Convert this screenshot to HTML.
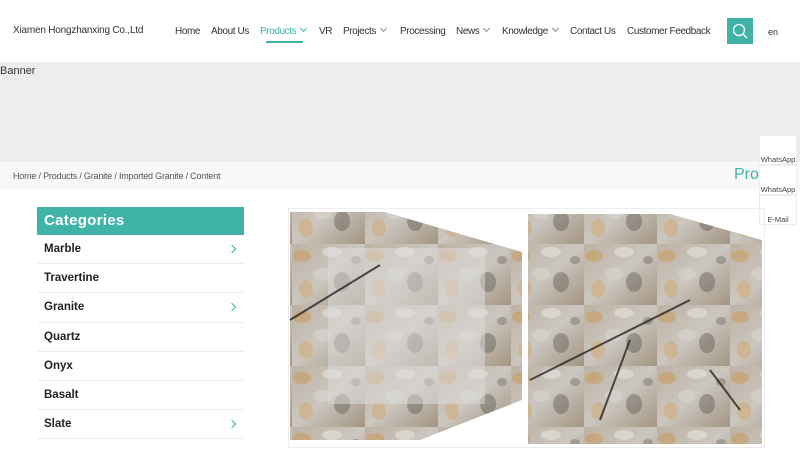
<!DOCTYPE html>
<html><head><meta charset="utf-8"><style>
*{margin:0;padding:0;box-sizing:border-box}
body{width:800px;height:450px;overflow:hidden;background:#fff;font-family:"Liberation Sans",sans-serif;position:relative;color:#333}
.logo{position:absolute;left:13px;top:25px;font-size:10px;letter-spacing:-0.2px;color:#333}
.nav{position:absolute;top:26px;font-size:10px;letter-spacing:-0.4px;color:#333;white-space:nowrap}
.nav span{position:absolute}
.chev{display:inline-block;width:5px;height:5px;border-right:1px solid #888;border-bottom:1px solid #888;transform:rotate(45deg);margin-left:5px;vertical-align:3px}
.search{position:absolute;left:727px;top:18px;width:26px;height:26px;background:#3fb3a8}
.banner{position:absolute;left:0;top:62px;width:800px;height:100px;background:#ededed;font-size:11px;padding-top:3px}
.crumb{position:absolute;left:0;top:163px;width:800px;height:26px;background:#f8f8f8;font-size:9px;letter-spacing:-0.2px;color:#555;padding:8px 13px}
.prod{position:absolute;left:734px;top:166px;font-size:16px;color:#3fb3a8}
.side{position:absolute;left:759px;width:38px;height:30px;background:#fff;border:1px solid #eee;font-size:7.5px;color:#444;text-align:center;padding-top:19px}
.cat{position:absolute;left:37px;top:207px;width:207px}
.cat h3{background:#3fb3a8;color:#fff;font-size:15px;font-weight:bold;height:28px;line-height:28px;padding-left:7px;letter-spacing:.3px}
.cat div{height:29.2px;border-bottom:1px solid #eee;font-size:11.5px;font-weight:bold;color:#222;padding:8px 0 0 7px;position:relative}
.cat i{position:absolute;right:9px;top:11px;width:6px;height:6px;border-right:1.3px solid #3fb3a8;border-top:1.3px solid #3fb3a8;transform:rotate(45deg)}
</style></head><body>
<div class="logo">Xiamen Hongzhanxing Co.,Ltd</div>
<div class="nav" style="left:0;width:720px">
<span style="left:175px">Home</span><span style="left:211px">About Us</span>
<span style="left:260px;color:#3fb3a8">Products<i class="chev" style="border-color:#3fb3a8"></i></span>
<span style="left:319px">VR</span><span style="left:343px">Projects<i class="chev"></i></span>
<span style="left:400px">Processing</span><span style="left:456px">News<i class="chev"></i></span>
<span style="left:502px">Knowledge<i class="chev"></i></span><span style="left:570px">Contact Us</span><span style="left:627px">Customer Feedback</span>
</div>
<div style="position:absolute;left:266px;top:41px;width:37px;height:2px;background:#3fb3a8"></div>
<div class="search"><svg width="26" height="26"><circle cx="12" cy="12" r="5.5" fill="none" stroke="#fff" stroke-width="1.3"/><line x1="16" y1="16" x2="20" y2="20" stroke="#fff" stroke-width="1.3"/></svg></div>
<div style="position:absolute;left:768px;top:27px;font-size:9px">en</div>
<div class="banner">Banner</div>
<div class="crumb">Home / Products / Granite / Imported Granite / Content</div>
<div class="prod">Prod</div>
<div class="side" style="top:135px">WhatsApp</div>
<div class="side" style="top:165px">WhatsApp</div>
<div class="side" style="top:195px">E-Mail</div>
<div class="cat"><h3>Categories</h3>
<div>Marble<i></i></div><div>Travertine</div><div>Granite<i></i></div><div>Quartz</div><div>Onyx</div><div>Basalt</div><div>Slate<i></i></div></div>
<div style="position:absolute;left:288px;top:208px;width:477px;height:240px;border:1px solid #eee"></div>
<svg style="position:absolute;left:0;top:0" width="800" height="450">
<defs>
<linearGradient id="g" x1="0" y1="0" x2="1" y2="1"><stop offset="0" stop-color="#bdb2a3"/><stop offset=".5" stop-color="#cbc6bf"/><stop offset="1" stop-color="#a39582"/></linearGradient>
<pattern id="p" width="73" height="61" patternUnits="userSpaceOnUse"><rect width="73" height="61" fill="url(#g)"/><ellipse cx="10" cy="12" rx="9" ry="6" fill="#c99a5a" opacity=".55"/><ellipse cx="50" cy="38" rx="8" ry="10" fill="#55504a" opacity=".4"/><ellipse cx="40" cy="8" rx="10" ry="5" fill="#e2ded8" opacity=".7"/><ellipse cx="14" cy="45" rx="7" ry="9" fill="#d2a464" opacity=".45"/><ellipse cx="64" cy="16" rx="5" ry="4" fill="#6a6258" opacity=".4"/><ellipse cx="30" cy="30" rx="9" ry="6" fill="#d9d5cf" opacity=".6"/></pattern>
</defs>
<polygon points="290,212 385,212 522,252 522,400 420,440 290,440" fill="url(#p)"/>
<rect x="328" y="248" width="157" height="156" fill="#ddd" opacity=".5"/>
<polygon points="528,214 670,214 762,240 762,444 528,444" fill="url(#p)"/>
<g stroke="#1a1a1a" stroke-width="2" opacity=".75"><line x1="290" y1="320" x2="380" y2="265"/><line x1="530" y1="380" x2="690" y2="300"/><line x1="600" y1="420" x2="630" y2="340"/><line x1="740" y1="410" x2="710" y2="370"/></g>
</svg>
</body></html>
